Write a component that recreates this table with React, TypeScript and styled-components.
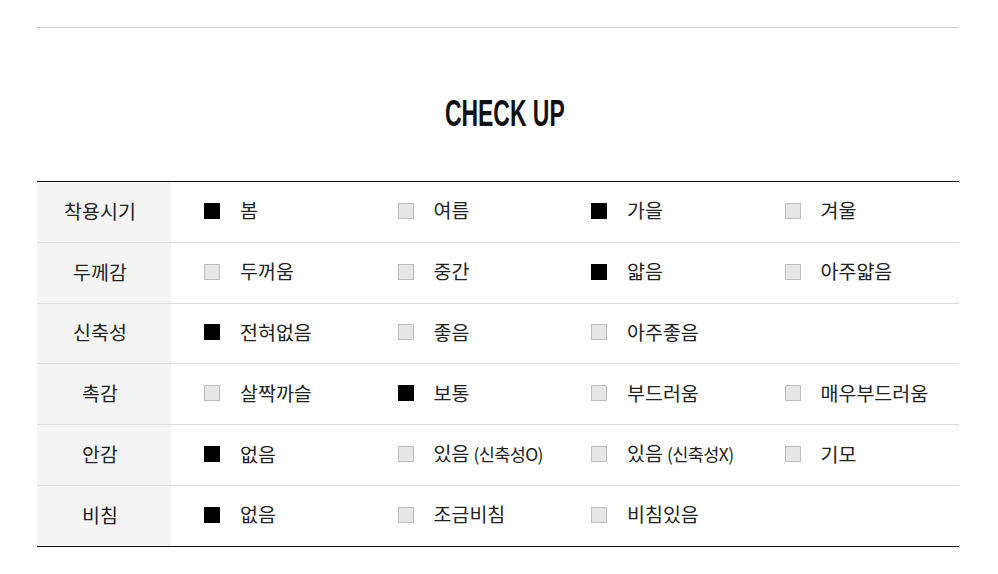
import React from "react";
import styled, { createGlobalStyle } from "styled-components";

const GlobalStyle = createGlobalStyle`
  body {
    margin: 0;
    background: #fff;
    font-family: "Noto Sans CJK KR", "Noto Sans", sans-serif;
    color: #222;
  }
`;

type Opt = [string, boolean, string?];

const rows = [
  { label: "착용시기", options: [["봄", true], ["여름", false], ["가을", true], ["겨울", false]] },
  { label: "두께감", options: [["두꺼움", false], ["중간", false], ["얇음", true], ["아주얇음", false]] },
  { label: "신축성", options: [["전혀없음", true], ["좋음", false], ["아주좋음", false]] },
  { label: "촉감", options: [["살짝까슬", false], ["보통", true], ["부드러움", false], ["매우부드러움", false]] },
  { label: "안감", options: [["없음", true], ["있음", false, "(신축성O)"], ["있음", false, "(신축성X)"], ["기모", false]] },
  { label: "비침", options: [["없음", true], ["조금비침", false], ["비침있음", false]] },
] as { label: string; options: Opt[] }[];

export default function App() {
  return (
    <Wrapper>
      <GlobalStyle />
      <TopRule />
      <Title>CHECK UP</Title>
      <Table>
        {rows.map((row) => (
          <Row key={row.label}>
            <Label>{row.label}</Label>
            <Options>
              {row.options.map(([text, checked, note], i) => (
                <Option key={i}>
                  <Box $checked={checked} />
                  <OptionText>
                    {text}
                    {note && <Note>{note}</Note>}
                  </OptionText>
                </Option>
              ))}
            </Options>
          </Row>
        ))}
      </Table>
    </Wrapper>
  );
}

const Wrapper = styled.div`
  width: 922px;
  margin: 0 0 0 37px;
  padding-top: 27px;
`;

const TopRule = styled.div`
  height: 1px;
  background: #c8c8c8;
`;

const Title = styled.h2`
  margin: 0;
  padding: 66px 0 47px 22px;
  text-align: center;
  font-family: "Liberation Sans", sans-serif;
  font-weight: 700;
  font-size: 37px;
  line-height: 40px;
  color: #111;
  transform: scaleX(0.62);
`;

const Table = styled.div`
  border-top: 1px solid #111;
  border-bottom: 1px solid #111;
`;

const Row = styled.div`
  display: flex;
  height: 59.8px;
  & + & {
    border-top: 1px solid #dcdcdc;
  }
`;

const Label = styled.div`
  width: 134px;
  box-sizing: border-box;
  padding: 0 8px 3px 0;
  flex-shrink: 0;
  background: #f4f4f4;
  display: flex;
  align-items: center;
  justify-content: center;
  font-size: 19.5px;
  color: #222;
`;

const Options = styled.div`
  display: flex;
  align-items: center;
  padding-left: 33px;
`;

const Option = styled.div`
  width: 193.5px;
  display: flex;
  align-items: center;
  gap: 20px;
`;

const Box = styled.span<{ $checked: boolean }>`
  width: 16px;
  height: 16px;
  box-sizing: border-box;
  flex-shrink: 0;
  margin-top: -2px;
  background: ${(p) => (p.$checked ? "#000" : "#e6e6e6")};
  border: 1px solid ${(p) => (p.$checked ? "#000" : "#bdbdbd")};
`;

const OptionText = styled.span`
  font-size: 19.5px;
  line-height: 24px;
  margin-top: -3px;
  color: #222;
  white-space: nowrap;
`;

const Note = styled.span`
  font-size: 17.5px;
  letter-spacing: -0.6px;
  margin-left: 4px;
`;
